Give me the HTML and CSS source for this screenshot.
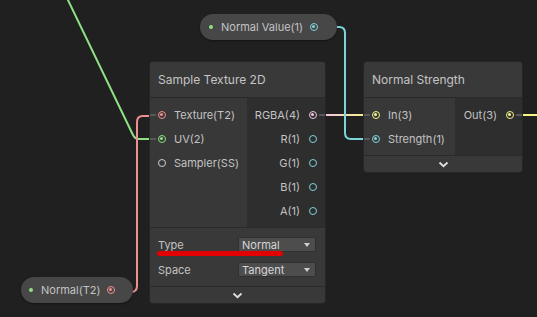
FILE: index.html
```html
<!DOCTYPE html>
<html lang="en">
<head>
    <meta charset="UTF-8">
    <title>Shader Graph - Normal Strength</title>
    <link rel="stylesheet" href="styles.css">
</head>
<body>
    <div class="graph">
        <svg class="wires" width="537" height="317" viewBox="0 0 537 317">
            <defs>
                <linearGradient id="rgbaToIn" gradientUnits="userSpaceOnUse" x1="325" y1="0" x2="364" y2="0">
                    <stop offset="0" stop-color="#f2c4e2"/>
                    <stop offset="1" stop-color="#f2f28c"/>
                </linearGradient>
            </defs>
            <path d="M 67 -2 L 133 135 Q 135 139 139 139 L 150 139" stroke="#8fe084"/>
            <path d="M 128 292 L 131 292 Q 137 292 137 286 L 137 122 Q 137 116 143 116 L 150 116" stroke="#f08f8f"/>
            <path d="M 325 115 L 364 115" stroke="url(#rgbaToIn)"/>
            <path d="M 320 27 L 339 27 Q 345 27 345 33 L 345 133 Q 345 139 351 139 L 364 139" stroke="#7dd5dc"/>
            <path d="M 522 115 L 540 115" stroke="#f4f47e"/>
        </svg>

        <!-- property pills -->
        <div class="pill pill-value">
            <span class="dot"></span>
            <span class="pill-label">Normal Value(1)</span>
            <span class="port cyan linked"></span>
        </div>
        <div class="pill pill-texture">
            <span class="dot"></span>
            <span class="pill-label">Normal(T2)</span>
            <span class="port red linked"></span>
        </div>

        <!-- Sample Texture 2D -->
        <div class="node node-sample">
            <div class="node-title">Sample Texture 2D</div>
            <div class="node-body">
                <div class="inputs">
                    <div class="row in-row"><span class="port red linked stub-left"></span>Texture(T2)</div>
                    <div class="row in-row"><span class="port green linked stub-left"></span>UV(2)</div>
                    <div class="row in-row"><span class="port grey"></span>Sampler(SS)</div>
                </div>
                <div class="outputs">
                    <div class="row out-row">RGBA(4)<span class="port pink linked stub-right"></span></div>
                    <div class="row out-row">R(1)<span class="port cyan"></span></div>
                    <div class="row out-row">G(1)<span class="port cyan"></span></div>
                    <div class="row out-row">B(1)<span class="port cyan"></span></div>
                    <div class="row out-row">A(1)<span class="port cyan"></span></div>
                </div>
            </div>
            <div class="settings">
                <div class="setting">
                    <span class="setting-label">Type</span>
                    <div class="dropdown">Normal<span class="caret"></span></div>
                </div>
                <div class="setting">
                    <span class="setting-label">Space</span>
                    <div class="dropdown">Tangent<span class="caret"></span></div>
                </div>
            </div>
            <div class="collapse">
                <svg width="11" height="7" viewBox="0 0 11 7"><polyline points="1.5,1.5 5.5,5.2 9.5,1.5"/></svg>
            </div>
        </div>

        <!-- Normal Strength -->
        <div class="node node-strength">
            <div class="node-title">Normal Strength</div>
            <div class="node-body">
                <div class="inputs">
                    <div class="row in-row"><span class="port yellow linked stub-left"></span>In(3)</div>
                    <div class="row in-row"><span class="port cyan linked stub-left"></span>Strength(1)</div>
                </div>
                <div class="outputs">
                    <div class="row out-row">Out(3)<span class="port yellow linked stub-right"></span></div>
                </div>
            </div>
            <div class="collapse">
                <svg width="11" height="7" viewBox="0 0 11 7"><polyline points="1.5,1.5 5.5,5.2 9.5,1.5"/></svg>
            </div>
        </div>

        <div class="marker"></div>
    </div>
</body>
</html>
```

FILE: styles.css
```css
body {
    margin: 0;
    background: #202020;
    font-family: Inter, "Noto Sans", sans-serif;
    font-size: 11px;
    color: #c3c3c3;
}
.graph {
    position: relative;
    width: 537px;
    height: 317px;
    overflow: hidden;
    background: #202020;
}
.wires {
    position: absolute;
    left: 0;
    top: 0;
}
.wires path {
    fill: none;
    stroke-width: 2;
}

/* pills */
.pill {
    position: absolute;
    display: flex;
    align-items: center;
    height: 26px;
    border-radius: 13px;
    background: #474747;
    box-shadow: 0 1px 2px rgba(0,0,0,0.4);
    box-sizing: border-box;
}
.pill-value { left: 200px; top: 14px; width: 137px; padding-left: 9px; }
.pill-texture { left: 21px; top: 277px; width: 112px; padding-left: 8px; }
.dot {
    width: 4px;
    height: 4px;
    border-radius: 50%;
    background: #8fe084;
    margin-right: 8px;
}
.pill-label { width: 89px; }
.pill-texture .pill-label { width: 66px; }

/* ports */
.port {
    position: relative;
    width: 8px;
    height: 8px;
    box-sizing: border-box;
    border: 1.5px solid #bdbdbd;
    border-radius: 50%;
    flex: none;
}
.port.linked::after {
    content: "";
    position: absolute;
    left: 1px;
    top: 1px;
    width: 3px;
    height: 3px;
    border-radius: 50%;
    background: currentColor;
}
.port.red { border-color: #f08f8f; color: #f08f8f; }
.port.green { border-color: #8fe084; color: #8fe084; }
.port.grey { border-color: #cfcfcf; }
.port.cyan { border-color: #7dd5dc; color: #7dd5dc; }
.port.pink { border-color: #f2c4e2; color: #f2c4e2; }
.port.yellow { border-color: #f2f28c; color: #f2f28c; }
.stub-left::before,
.stub-right::before {
    content: "";
    position: absolute;
    top: 2px;
    width: 7px;
    height: 1.5px;
    background: #585858;
}
.stub-left::before { left: -10px; }
.stub-right::before { right: -10px; }

/* nodes */
.node {
    position: absolute;
    top: 62px;
    background: #393939;
    border-radius: 3px;
    box-shadow: 0 0 0 1px #262626;
    overflow: hidden;
}
.node-sample { left: 150px; width: 175px; }
.node-strength { left: 364px; width: 158px; }
.node-title {
    height: 36px;
    line-height: 36px;
    padding-left: 8px;
    font-size: 12px;
    color: #c4c4c4;
    border-bottom: 1px solid #2a2a2a;
    box-sizing: border-box;
}
.node-body {
    display: flex;
}
.inputs {
    background: #383838;
    padding: 5px 0 4px;
}
.node-sample .inputs { width: 97px; }
.node-strength .inputs { width: 91px; }
.outputs {
    flex: 1;
    background: #2e2e2e;
    padding: 5px 0 4px;
}
.row {
    display: flex;
    align-items: center;
    height: 24px;
}
.in-row { padding-left: 8px; }
.in-row .port { margin-right: 8px; }
.out-row {
    justify-content: flex-end;
    padding-right: 8px;
}
.out-row .port { margin-left: 9px; }

/* settings */
.settings {
    border-top: 1px solid #2a2a2a;
    padding: 4px 9px 4px 8px;
}
.setting {
    display: flex;
    align-items: center;
    justify-content: space-between;
    height: 25px;
}
.setting-label { padding-top: 1px; }
.dropdown {
    position: relative;
    display: flex;
    align-items: center;
    width: 78px;
    height: 15px;
    box-sizing: border-box;
    padding-left: 3px;
    background: #4d4d4d;
    border: 1px solid #303030;
    border-radius: 2px;
    color: #d6d6d6;
}
.caret {
    position: absolute;
    right: 5px;
    top: 5px;
    border-left: 3.5px solid transparent;
    border-right: 3.5px solid transparent;
    border-top: 4px solid #cfcfcf;
}
.collapse {
    display: flex;
    justify-content: center;
    align-items: center;
    height: 16px;
    border-top: 1px solid #2a2a2a;
}
.collapse polyline {
    fill: none;
    stroke: #e0e0e0;
    stroke-width: 1.8;
}

/* red annotation stroke */
.marker {
    position: absolute;
    left: 157px;
    top: 251px;
    width: 126px;
    height: 5px;
    border-radius: 3px;
    background: #e30000;
}
```
